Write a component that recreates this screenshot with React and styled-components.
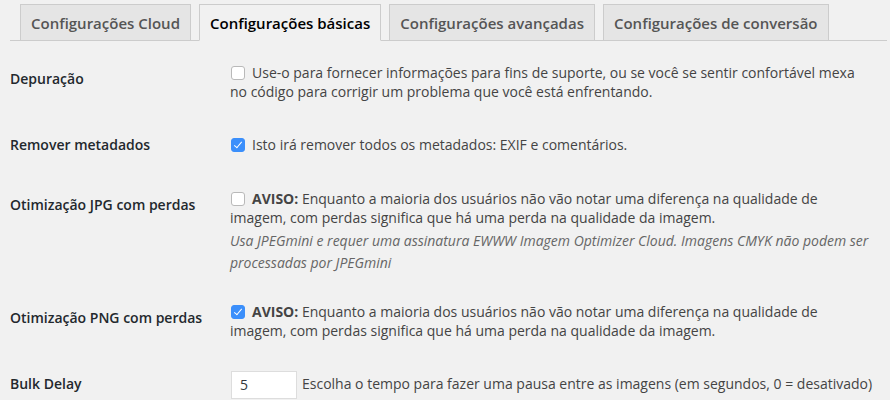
import React from 'react';
import styled, { createGlobalStyle } from 'styled-components';

const GlobalStyle = createGlobalStyle`
body {
    margin: 0;
    background: #f1f1f1;
    font-family: 'Open Sans', 'Noto Sans', sans-serif;
    font-size: 14px;
    color: #444;
}
`

const Page = styled.div`
padding: 4px 3px 0 10px;
`

const TabBar = styled.div`
display: flex;
gap: 8px;
padding-left: 10px;
border-bottom: 1px solid #ccc;
`

const Tab = styled.a`
display: block;
padding: 6px 10px 5px;
margin-bottom: -1px;
font-size: 15px;
line-height: 24px;
font-weight: 600;
text-decoration: none;
white-space: nowrap;
border: 1px solid #ccc;
background: ${props => props.active ? '#f1f1f1' : '#e5e5e5'};
border-bottom-color: ${props => props.active ? '#f1f1f1' : '#ccc'};
color: ${props => props.active ? '#000' : '#555'};
`

const Form = styled.div`
margin-top: 9px;
`

const Row = styled.div`
display: grid;
grid-template-columns: 210px 652px;
align-items: start;
`

const Label = styled.div`
padding: 20px 10px 22px 0;
line-height: 18px;
font-weight: 600;
color: #23282d;
`

const Field = styled.div`
align-self: center;
min-width: 0;
padding: 14px 0 15px 10px;
line-height: 18.5px;
white-space: ${props => props.nowrap ? 'nowrap' : 'normal'};
`

const Option = styled.p`
margin: 0;
max-width: 632px;
`

const Box = styled.span`
display: inline-block;
position: relative;
box-sizing: border-box;
width: 14px;
height: 14px;
margin: 0 7px 0 1px;
vertical-align: -2px;
border-radius: 3px;
background: ${props => props.checked ? '#3b8ffb' : '#fff'};
border: 1px solid ${props => props.checked ? '#3b8ffb' : '#b9b9b9'};

&::after {
    content: '';
    display: ${props => props.checked ? 'block' : 'none'};
    position: absolute;
    left: 4px;
    top: 1px;
    width: 3px;
    height: 7px;
    border: solid #fff;
    border-width: 0 1.5px 1.5px 0;
    transform: rotate(40deg);
}
`

const Strong = styled.b`
font-weight: 700;
`

const Description = styled.p`
margin: 3px 0 0;
line-height: 22px;
font-style: italic;
color: #666;
`

const NumberInput = styled.span`
display: inline-block;
box-sizing: border-box;
width: 66px;
height: 28px;
margin: 0 5px 0 1px;
padding: 0 8px;
line-height: 26px;
vertical-align: middle;
background: #fff;
border: 1px solid #ddd;
color: #32373c;
`

const tabs = ['Configurações Cloud', 'Configurações básicas', 'Configurações avançadas', 'Configurações de conversão']

const lossyWarning = 'Enquanto a maioria dos usuários não vão notar uma diferença na qualidade de imagem, com perdas significa que há uma perda na qualidade da imagem.'

const App = () => {
    return (
        <Page>
            <GlobalStyle />
            <TabBar>
                {tabs.map((t, i) => (
                    <Tab key={t} active={i === 1}>{t}</Tab>
                ))}
            </TabBar>
            <Form>
                <Row>
                    <Label>Depuração</Label>
                    <Field>
                        <Option>
                            <Box />
                            Use-o para fornecer informações para fins de suporte, ou se você se sentir confortável mexa no código para corrigir um problema que você está enfrentando.
                        </Option>
                    </Field>
                </Row>
                <Row>
                    <Label>Remover metadados</Label>
                    <Field>
                        <Option>
                            <Box checked />
                            Isto irá remover todos os metadados: EXIF e comentários.
                        </Option>
                    </Field>
                </Row>
                <Row>
                    <Label>Otimização JPG com perdas</Label>
                    <Field>
                        <Option>
                            <Box />
                            <Strong>AVISO:</Strong> {lossyWarning}
                        </Option>
                        <Description>Usa JPEGmini e requer uma assinatura EWWW Imagem Optimizer Cloud. Imagens CMYK não podem ser processadas por JPEGmini</Description>
                    </Field>
                </Row>
                <Row>
                    <Label>Otimização PNG com perdas</Label>
                    <Field>
                        <Option>
                            <Box checked />
                            <Strong>AVISO:</Strong> {lossyWarning}
                        </Option>
                    </Field>
                </Row>
                <Row>
                    <Label>Bulk Delay</Label>
                    <Field nowrap>
                        <NumberInput>5</NumberInput>
                        Escolha o tempo para fazer uma pausa entre as imagens (em segundos, 0 = desativado)
                    </Field>
                </Row>
            </Form>
        </Page>
    )
}

export default App
